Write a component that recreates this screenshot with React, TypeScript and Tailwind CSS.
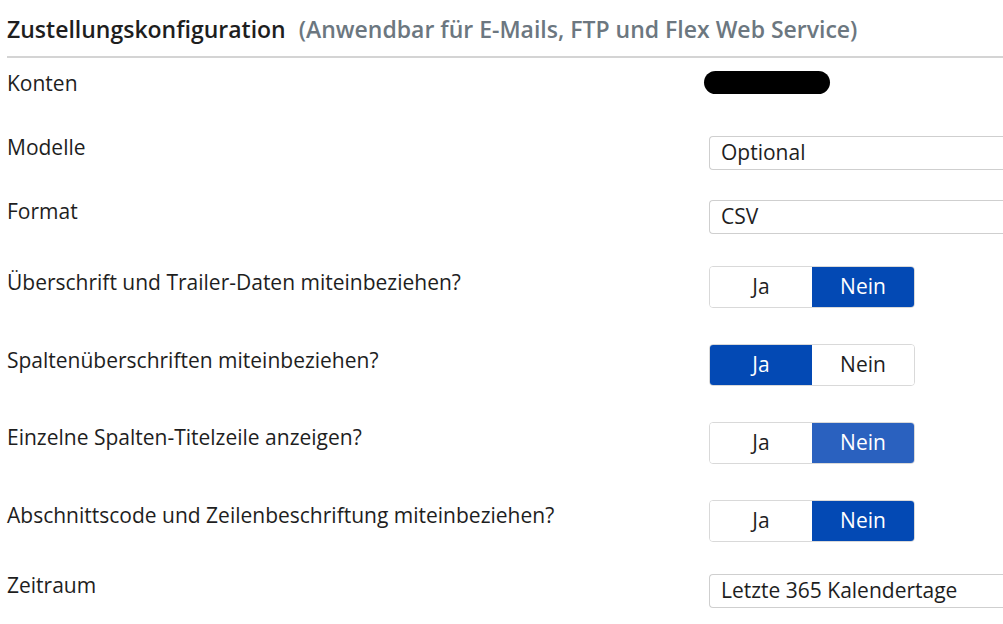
import React from "react";

const font = { fontFamily: "'Open Sans', Lato, sans-serif" };

const SelectBox = ({ value }: { value: string }) => (
  <div className="flex-1 h-[34px] border border-r-0 border-[#cfcfcf] rounded-l-[4px] pl-[11px] flex items-center text-[21px] text-[#1e1e1e]">
    {value}
  </div>
);

const Toggle = ({ yes, hover }: { yes: boolean; hover?: boolean }) => {
  const active = hover ? "bg-[#2a61bf] text-white" : "bg-[#0349b4] text-white";
  return (
    <div className="flex w-[206px] h-[42px] rounded-[4px] border border-[#d9d9d9] overflow-hidden text-[21px]">
      <div
        className={`w-[102px] flex items-center justify-center ${
          yes ? active : "bg-white text-[#1e1e1e]"
        }`}
      >
        Ja
      </div>
      <div
        className={`flex-1 flex items-center justify-center ${
          !yes ? active : "bg-white text-[#1e1e1e]"
        }`}
      >
        Nein
      </div>
    </div>
  );
};

const Row = ({
  label,
  height,
  labelTop,
  controlTop,
  children,
}: {
  label: string;
  height: number;
  labelTop: number;
  controlTop: number;
  children: React.ReactNode;
}) => (
  <div className="flex items-start" style={{ height }}>
    <div
      className="w-[702px] text-[21px] leading-[24px] text-[#1e1e1e]"
      style={{ paddingTop: labelTop }}
    >
      {label}
    </div>
    <div className="flex-1 flex" style={{ paddingTop: controlTop }}>
      {children}
    </div>
  </div>
);

export default function App() {
  return (
    <div className="w-[1003px] h-[624px] bg-white overflow-hidden pl-[7px]" style={font}>
      <div className="h-[58px] border-b-2 border-[#d4d4d4] flex items-center pt-[3px]">
        <span className="text-[23px] font-semibold text-[#1e1e1e]">Zustellungskonfiguration</span>
        <span className="text-[23px] font-semibold text-[#6c7780] ml-[13px]">
          (Anwendbar für E-Mails, FTP und Flex Web Service)
        </span>
      </div>
      <Row label="Konten" height={64} labelTop={13} controlTop={13}>
        <div className="-ml-[5px] w-[126px] h-[23px] rounded-full bg-black" />
      </Row>
      <Row label="Modelle" height={64} labelTop={13} controlTop={14}>
        <SelectBox value="Optional" />
      </Row>
      <Row label="Format" height={64} labelTop={13} controlTop={14}>
        <SelectBox value="CSV" />
      </Row>
      <Row label="Überschrift und Trailer-Daten miteinbeziehen?" height={78} labelTop={20} controlTop={16}>
        <Toggle yes={false} />
      </Row>
      <Row label="Spaltenüberschriften miteinbeziehen?" height={78} labelTop={20} controlTop={16}>
        <Toggle yes={true} />
      </Row>
      <Row label="Einzelne Spalten-Titelzeile anzeigen?" height={78} labelTop={19} controlTop={16}>
        <Toggle yes={false} hover />
      </Row>
      <Row label="Abschnittscode und Zeilenbeschriftung miteinbeziehen?" height={78} labelTop={19} controlTop={16}>
        <Toggle yes={false} />
      </Row>
      <Row label="Zeitraum" height={62} labelTop={11} controlTop={12}>
        <SelectBox value="Letzte 365 Kalendertage" />
      </Row>
    </div>
  );
}
